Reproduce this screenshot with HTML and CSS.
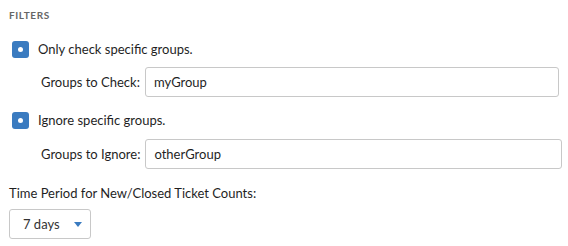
FILE: index.html
```html
<!DOCTYPE html>
<html lang="en">
<head>
    <meta charset="UTF-8">
    <title>Filters</title>
    <link rel="stylesheet" href="styles.css">
</head>
<body>
    <div class="panel">
        <h3 class="section-title">Filters</h3>

        <label class="check-row">
            <span class="checkbox"><span class="dot"></span></span>
            Only check specific groups.
        </label>
        <div class="field-row field-check">
            <span class="field-label">Groups to Check:</span>
            <input type="text" class="text-input" value="myGroup">
        </div>

        <label class="check-row">
            <span class="checkbox"><span class="dot"></span></span>
            Ignore specific groups.
        </label>
        <div class="field-row field-ignore">
            <span class="field-label">Groups to Ignore:</span>
            <input type="text" class="text-input" value="otherGroup">
        </div>

        <div class="period">
            <div class="period-label">Time Period for New/Closed Ticket Counts:</div>
            <div class="select">
                <span>7 days</span>
                <span class="caret"></span>
            </div>
        </div>
    </div>
</body>
</html>
```

FILE: styles.css
```css
body {
    margin: 0;
    padding: 0;
    background: #ffffff;
    font-family: Lato, "Noto Sans", sans-serif;
    font-size: 13px;
    color: #1f1f1f;
}

.panel {
    padding: 8px 10px 0 9px;
}

.section-title {
    margin: 0 0 19px 0;
    font-size: 10px;
    font-weight: bold;
    letter-spacing: 0.6px;
    text-transform: uppercase;
    color: #666666;
    line-height: 14px;
}

.check-row {
    display: flex;
    align-items: center;
    gap: 9px;
    margin-left: 3px;
    height: 17px;
    line-height: 17px;
}

.checkbox {
    width: 17px;
    height: 17px;
    border-radius: 3px;
    background-color: #3a7bc0; /* blue checked box */
    display: flex;
    align-items: center;
    justify-content: center;
}

.dot {
    width: 5px;
    height: 5px;
    border-radius: 50%;
    background: #ffffff;
}

.field-row {
    display: flex;
    align-items: center;
    gap: 5px;
    margin: 9px 0 15px 32px;
}

.field-check {
    margin-right: -1px;
}

.field-ignore {
    margin-top: 10px;
    margin-right: -4px;
}

.field-label {
    white-space: nowrap;
}

.text-input {
    flex: 1;
    height: 30px;
    box-sizing: border-box;
    border: 1px solid #c8c8c8;
    border-radius: 3px;
    padding: 0 8px;
    font-family: inherit;
    font-size: 13px;
    color: #1f1f1f;
    outline: none;
}

.period {
    margin-top: 3px;
}

.period-label {
    line-height: 18px;
    margin-bottom: 7px;
}

.select {
    display: flex;
    align-items: center;
    justify-content: space-between;
    width: 82px;
    height: 30px;
    box-sizing: border-box;
    padding: 0 8px 0 13px;
    border: 1px solid #c8c8c8;
    border-radius: 3px;
    color: #333333;
}

.caret {
    width: 0;
    height: 0;
    border-left: 4.5px solid transparent;
    border-right: 4.5px solid transparent;
    border-top: 5px solid #3a7bc0;
}
```
